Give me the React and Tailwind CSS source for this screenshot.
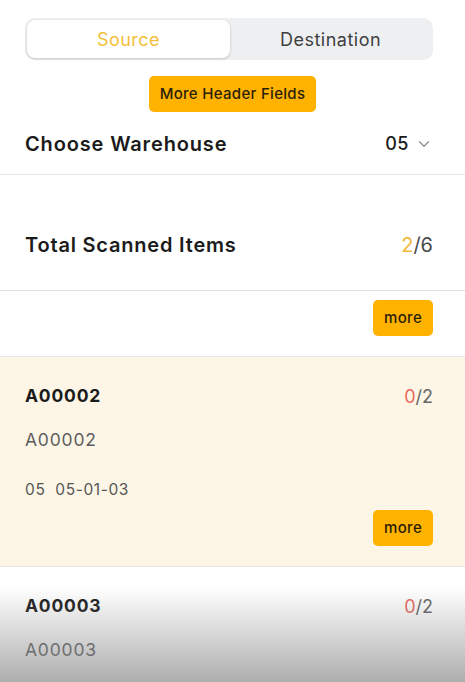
import { ChevronDown } from "lucide-react";

const items = [
  { code: "A00002", name: "A00002", loc: "05  05-01-03", scanned: 0, total: 2, active: true },
  { code: "A00003", name: "A00003", loc: "05  05-01-04", scanned: 0, total: 2, active: false },
];

const MoreButton = ({ label = "more" }) => (
  <button className="h-[36px] px-[11px] bg-[#ffb300] rounded-[5px] text-[15px] font-medium tracking-[0.3px] text-[#2b2008]">
    {label}
  </button>
);

export default function App() {
  return (
    <div
      className="relative w-[465px] h-[682px] overflow-hidden bg-white text-[#1b1b1b]"
      style={{ fontFamily: "Inter, 'Noto Sans', sans-serif" }}
    >
      {/* Source / Destination toggle */}
      <div className="ml-[25px] mr-[32px] mt-[18px] h-[42px] bg-[#eeeff1] rounded-[10px] p-[2px] flex">
        <div className="w-[203px] bg-white rounded-[8px] shadow-[0_1px_3px_rgba(0,0,0,0.18)] flex items-center justify-center pt-[1px] text-[18px] tracking-[0.5px] text-[#f2c03a]">
          Source
        </div>
        <div className="flex-1 flex items-center justify-center pt-[1px] text-[18px] tracking-[0.5px] text-[#3f3f42]">
          Destination
        </div>
      </div>

      <div className="mt-[16px] flex justify-center">
        <MoreButton label="More Header Fields" />
      </div>

      {/* warehouse */}
      <div className="h-[63px] pl-[25px] pr-[32px] pt-[1px] flex items-center justify-between border-b border-[#e6e6e6]">
        <span className="text-[20px] font-semibold tracking-[0.85px]">Choose Warehouse</span>
        <span className="flex items-center gap-[6px] text-[18px] font-medium tracking-[0.5px]">
          05
          <ChevronDown size={18} strokeWidth={1.6} className="text-[#8a8a8a]" />
        </span>
      </div>

      {/* totals */}
      <div className="h-[116px] pl-[25px] pr-[32px] pt-[24px] flex items-center justify-between border-b border-[#e0e0e0]">
        <span className="text-[20px] font-semibold tracking-[0.8px]">Total Scanned Items</span>
        <span className="text-[20px]">
          <span className="text-[#f4b83a]">2</span>
          <span className="text-[#4a4a4a]">/6</span>
        </span>
      </div>

      <div className="h-[66px] pr-[32px] pt-[9px] flex justify-end items-start border-b border-[#e6e6e6]">
        <MoreButton />
      </div>

      {/* item list */}
      {items.map((it) => (
        <div
          key={it.code}
          className={`h-[210px] pl-[25px] pr-[32px] pt-[25px] flex flex-col border-b border-[#e6e6e6] ${it.active ? "bg-[#fdf6e6]" : "bg-white"}`}
        >
          <div className="flex items-center justify-between h-[28px]">
            <span className="text-[17.5px] font-bold tracking-[0.8px]">{it.code}</span>
            <span className="text-[18px]">
              <span className="text-[#e6695d]">{it.scanned}</span>
              <span className="text-[#666]">/{it.total}</span>
            </span>
          </div>
          <div className="mt-[16px] h-[28px] flex items-center text-[17.5px] text-[#5d5d5d] tracking-[0.8px]">
            {it.name}
          </div>
          <div className="mt-[24px] h-[24px] flex items-center text-[15.5px] text-[#555] tracking-[0.6px] whitespace-pre">
            {it.loc}
          </div>
          <div className="mt-[8px] flex justify-end">
            <MoreButton />
          </div>
        </div>
      ))}

      {/* fade at the bottom of the screen */}
      <div className="absolute left-0 right-0 bottom-0 h-[95px] bg-gradient-to-b from-transparent to-[rgba(130,130,130,0.65)] pointer-events-none" />
    </div>
  );
}
